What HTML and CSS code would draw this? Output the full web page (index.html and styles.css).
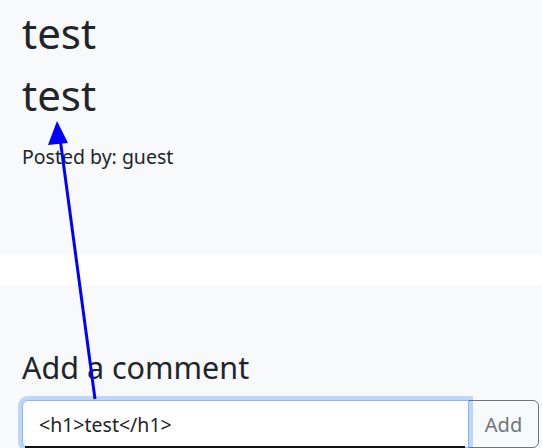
FILE: index.html
```html
<!DOCTYPE html>
<html>
<head>
<meta charset="utf-8">
<link rel="stylesheet" href="styles.css">
</head>
<body>
<section class="post">
  <h1 class="title">test</h1>
  <div class="content"><h1 class="title">test</h1></div>
  <p class="meta">Posted by: guest</p>
</section>
<div class="spacer"></div>
<section class="comments">
  <h3 class="add-title">Add a comment</h3>
  <form class="input-group">
    <input class="form-control" type="text" value="<h1>test</h1>">
    <button class="btn" type="button">Add</button>
  </form>
  <div class="dropdown"></div>
</section>
<svg class="annotation" width="542" height="448" viewBox="0 0 542 448">
  <line x1="95" y1="399" x2="60" y2="138" stroke="#0000ff" stroke-width="3"/>
  <polygon points="57,121 48,145 68,143" fill="#0000ff"/>
</svg>
</body>
</html>
```
FILE: styles.css
```css
* { box-sizing: border-box; }
html, body { margin: 0; padding: 0; }
body {
  background: #fff;
  font-family: "Noto Sans", "Open Sans", sans-serif;
  color: #212529;
  width: 542px;
  height: 448px;
  overflow: hidden;
  position: relative;
}
.post {
  background: #f8f9fa;
  height: 255px;
  padding: 6px 22px 0;
}
.title {
  font-size: 42px;
  font-weight: 400;
  line-height: 54px;
  margin: 0 0 8px;
}
.content .title { margin-bottom: 22px; }
.meta {
  font-size: 19.5px;
  margin: 0;
  line-height: 26px;
}
.spacer { height: 30px; }
.comments {
  background: #f8f9fa;
  height: 163px;
  padding: 61px 3px 0 22px;
  position: relative;
}
.add-title {
  font-size: 30.5px;
  font-weight: 400;
  line-height: 42px;
  margin: 0 0 12px;
}
.input-group {
  display: flex;
  margin: 0;
}
.form-control {
  flex: 1;
  min-width: 0;
  height: 48px;
  font-family: inherit;
  font-size: 19.5px;
  color: #212529;
  padding: 8px 16px;
  border: 1px solid #86b7fe;
  border-radius: 6px 0 0 6px;
  background: #fff;
  box-shadow: 0 0 0 4px rgba(13,110,253,.25);
  outline: none;
  position: relative;
  z-index: 2;
}
.btn {
  height: 48px;
  width: 71px;
  margin-left: -1px;
  font-family: inherit;
  font-size: 20px;
  color: #6c757d;
  background: transparent;
  border: 1px solid #6c757d;
  border-radius: 0 6px 6px 0;
  padding: 8px 0;
}
.dropdown {
  position: absolute;
  left: 25px;
  bottom: 0;
  width: 440px;
  height: 2px;
  background: #111;
  z-index: 3;
}
.annotation {
  position: absolute;
  left: 0;
  top: 0;
  pointer-events: none;
  z-index: 5;
}
```
